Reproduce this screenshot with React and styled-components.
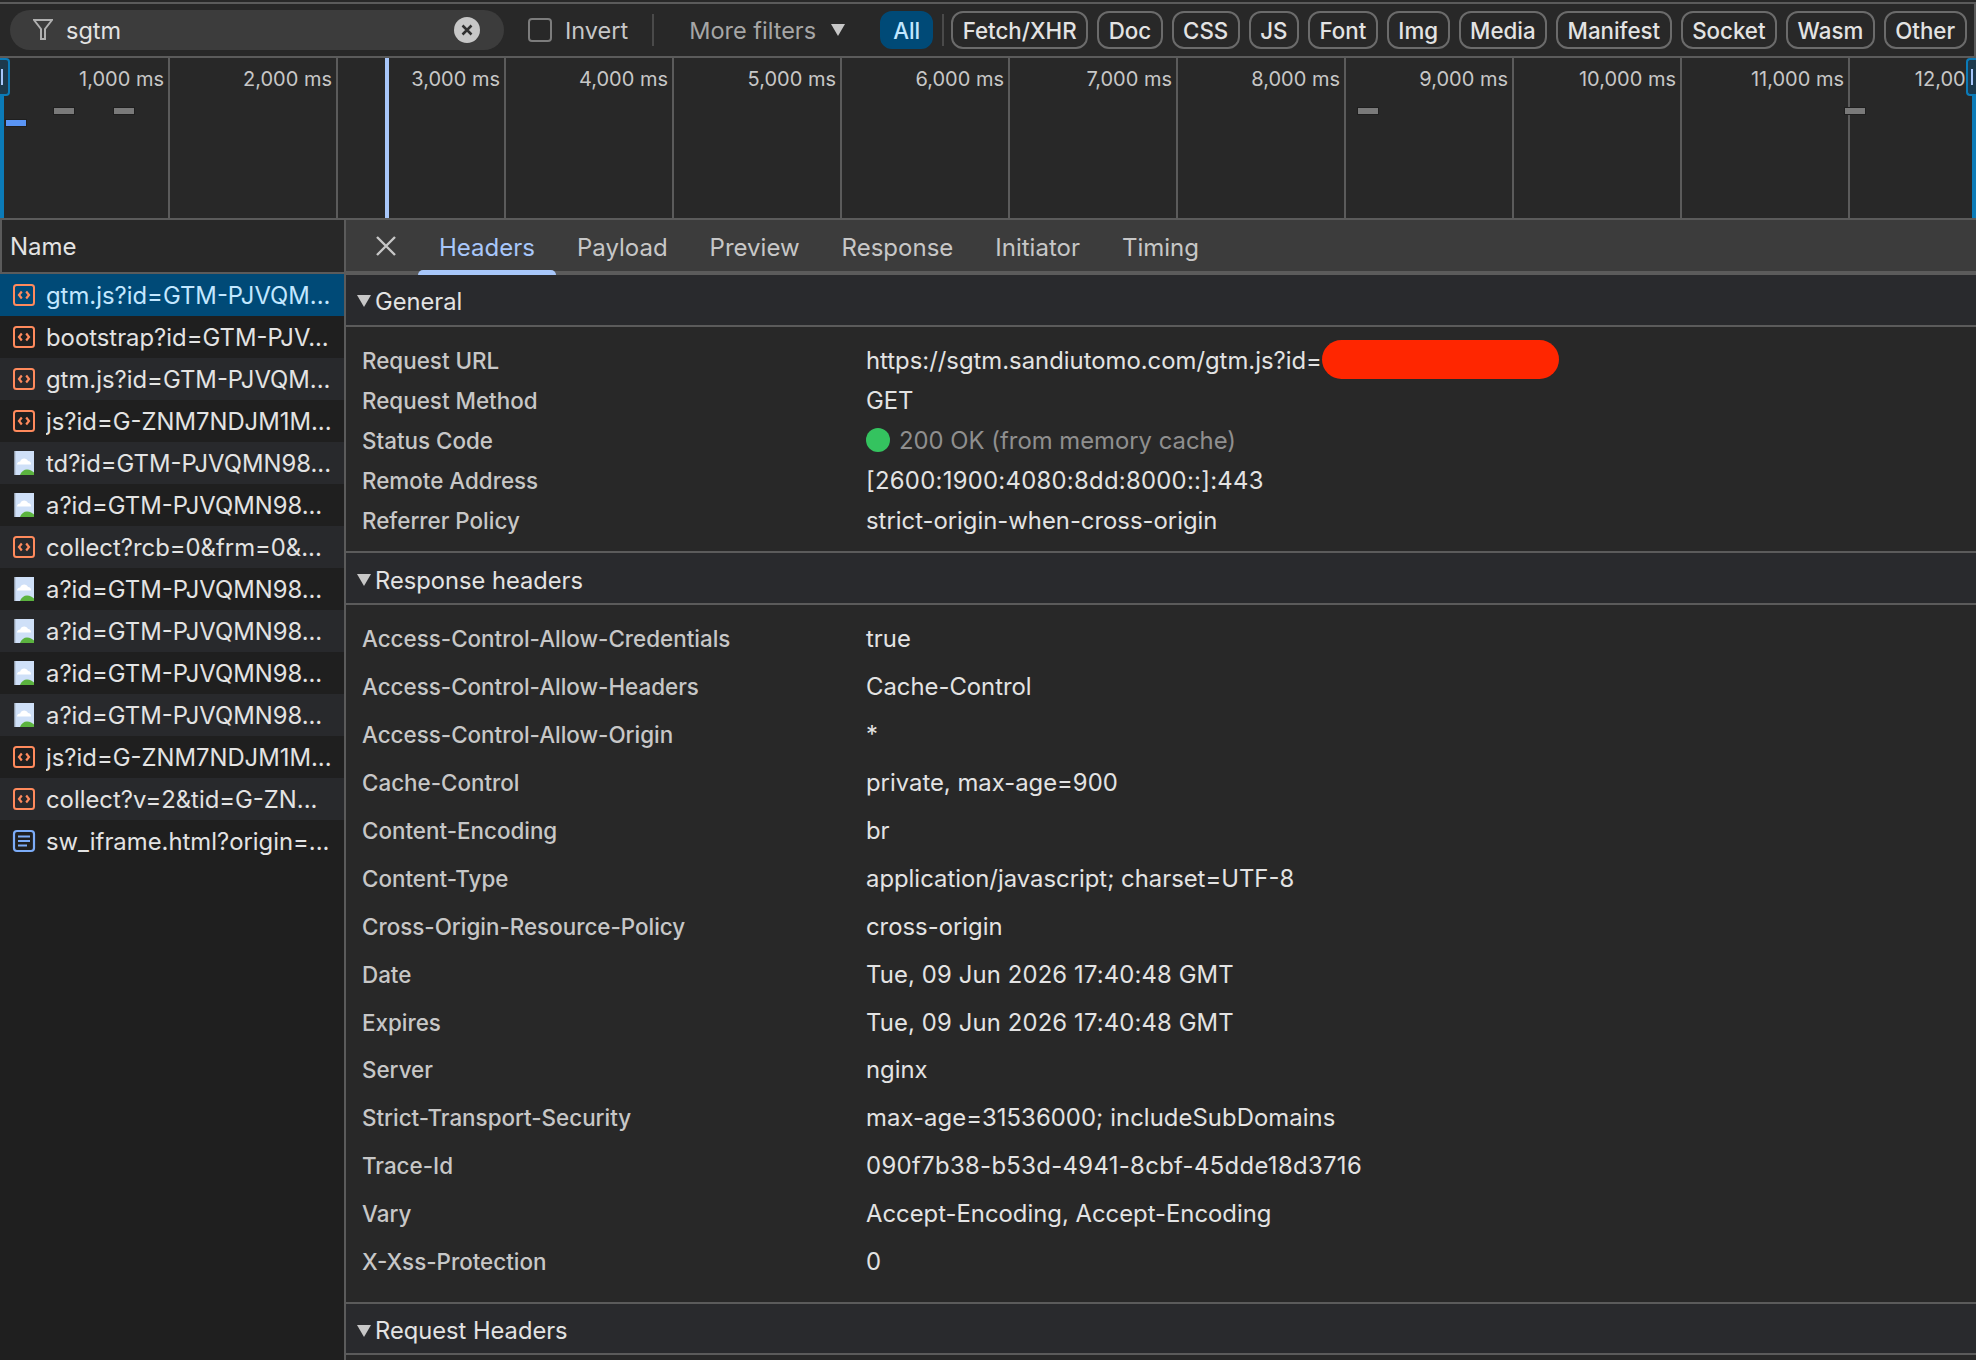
import React from 'react';
import styled, { createGlobalStyle } from 'styled-components';

const GlobalStyle = createGlobalStyle`
  html, body { margin: 0; padding: 0; background: #282828; }
  body { font-family: Inter, "Noto Sans", "Liberation Sans", sans-serif; }
  * { box-sizing: border-box; }
`;

const Page = styled.div`
  width: 1976px;
  height: 1360px;
  overflow: hidden;
  padding-top: 2px;
  background: #282828;
  display: flex;
  flex-direction: column;
`;

const Toolbar = styled.div`
  height: 56px;
  flex: none;
  display: flex;
  align-items: center;
  padding-left: 10px;
  border-top: 2px solid #5b5b5b;
  border-bottom: 2px solid #5b5b5b;
  border-right: 2px solid #5b5b5b;
  background: #282828;
  white-space: nowrap;
`;

const Search = styled.div`
  width: 494px;
  height: 40px;
  flex: none;
  border-radius: 20px;
  background: #3c3c3c;
  display: flex;
  align-items: center;
  padding: 0 24px 0 23px;
  color: #e3e3e3;
  font-size: 23.5px;
  gap: 13px;
`;

const SearchText = styled.span`
  flex: 1;
  padding-top: 1px;
`;

const Invert = styled.label`
  flex: none;
  display: flex;
  align-items: center;
  gap: 13px;
  margin-left: 24px;
  color: #c7c7c7;
  font-size: 23.5px;
`;

const CheckBox = styled.span`
  width: 24px;
  height: 24px;
  border: 2px solid #7c7c7c;
  border-radius: 4px;
`;

const Divider = styled.span`
  width: 2px;
  height: 32px;
  flex: none;
  background: #4a4a4a;
  margin: 0 ${p => p.$right}px 0 ${p => p.$left}px;
`;

const MoreFilters = styled.div`
  flex: none;
  display: flex;
  align-items: center;
  gap: 15px;
  color: #a6a6a6;
  font-size: 23.5px;
  margin-right: 35px;
`;

const Chips = styled.div`
  flex: none;
  display: flex;
  align-items: center;
  gap: 9px;
`;

const Chip = styled.div`
  height: 38px;
  padding: 0 ${p => (p.$active ? 11 : 9.5)}px;
  display: flex;
  align-items: center;
  border-radius: 12px;
  font-size: 22.3px;
  font-weight: 500;
  white-space: nowrap;
  color: ${p => (p.$active ? '#c2e7ff' : '#e3e3e3')};
  background: ${p => (p.$active ? '#004a77' : 'transparent')};
  border: 2px solid ${p => (p.$active ? '#004a77' : '#6b6b6b')};
`;

const Timeline = styled.div`
  position: relative;
  height: 160px;
  flex: none;
  display: flex;
  padding-left: 2px;
  background: #282828;
`;

const Tick = styled.div`
  width: 168px;
  flex: none;
  padding: 9px 4px 0 0;
  text-align: right;
  font-size: 20px;
  line-height: 24px;
  color: #c7c7c7;
  border-right: 2px solid #5b5b5b;
  white-space: nowrap;
`;

const Bar = styled.span`
  position: absolute;
  height: 6px;
  width: 20px;
  left: ${p => p.$x}px;
  top: ${p => p.$y}px;
  background: ${p => p.$color};
  box-shadow: 0 0 0 1px #1f1f1f;
`;

const PlayLine = styled.span`
  position: absolute;
  left: 385px;
  top: 0;
  bottom: 0;
  width: 4px;
  background: #a8c7fa;
`;

const EdgeLine = styled.span`
  position: absolute;
  top: 0;
  bottom: 0;
  width: 4px;
  background: #0b7bb8;
  ${p => (p.$right ? 'right: 0;' : 'left: 0;')}
`;

const Handle = styled.span`
  position: absolute;
  top: 0;
  width: 10px;
  height: 38px;
  background: #1d3a4d;
  border: 2px solid #0b7bb8;
  ${p => (p.$right
    ? 'right: 0; border-radius: 4px 0 0 4px; border-right: 0;'
    : 'left: 0; border-radius: 0 4px 4px 0; border-left: 0;')}
  &::after {
    content: '';
    position: absolute;
    top: 9px;
    bottom: 9px;
    width: 2px;
    background: #a8c7fa;
    ${p => (p.$right ? 'left: 3px;' : 'left: 1px;')}
  }
`;

const Main = styled.div`
  flex: 1;
  min-height: 0;
  display: flex;
  border-top: 2px solid #5b5b5b;
`;

const Sidebar = styled.div`
  width: 346px;
  flex: none;
  display: flex;
  flex-direction: column;
  background: #1f1f1f;
  border-right: 2px solid #5b5b5b;
`;

const NameHead = styled.div`
  height: 54px;
  flex: none;
  display: flex;
  align-items: center;
  padding-left: 8px;
  font-size: 24px;
  color: #e3e3e3;
  background: #282828;
  border-left: 2px solid #5b5b5b;
  border-bottom: 2px solid #5b5b5b;
`;

const Row = styled.div`
  height: 42px;
  flex: none;
  display: flex;
  align-items: center;
  gap: 10px;
  padding: 0 8px 0 12px;
  font-size: 23.85px;
  white-space: nowrap;
  color: ${p => (p.$selected ? '#c2e7ff' : '#e3e3e3')};
  background: ${p => (p.$selected ? '#004a77' : p.$odd ? '#28292c' : '#1f1f1f')};
`;

const RowName = styled.span`
  flex: 1;
  min-width: 0;
  overflow: hidden;
`;

const Details = styled.div`
  flex: 1;
  min-width: 0;
  display: flex;
  flex-direction: column;
  background: #282828;
`;

const TabBar = styled.div`
  height: 55px;
  flex: none;
  display: flex;
  align-items: stretch;
  background: #3c3c3c;
  border-bottom: 4px solid #5b5b5b;
  margin-bottom: -2px;
  position: relative;
`;

const CloseTab = styled.div`
  width: 72px;
  padding-left: 29px;
  display: flex;
  align-items: center;
  color: #c7c7c7;
`;

const Tab = styled.div`
  position: relative;
  padding: 4px 21px 0;
  display: flex;
  align-items: center;
  font-size: 24px;
  color: ${p => (p.$active ? '#a8c7fa' : '#c7c7c7')};
  ${p => p.$active && `
    &::after {
      content: '';
      position: absolute;
      left: 0;
      right: 0;
      bottom: -4px;
      height: 5px;
      border-radius: 5px 5px 0 0;
      background: #a8c7fa;
    }
  `}
`;

const SectionHead = styled.div`
  height: ${p => p.$h}px;
  flex: none;
  display: flex;
  align-items: center;
  gap: 4px;
  padding: 4px 0 0 11px;
  font-size: 23.7px;
  color: #e3e3e3;
  background: #292a2d;
  border-bottom: 2px solid #5b5b5b;
`;

const Triangle = styled.span`
  width: 0;
  height: 0;
  border-left: 7px solid transparent;
  border-right: 7px solid transparent;
  border-top: 12px solid #c7c7c7;
`;

const Section = styled.div`
  flex: none;
  padding: ${p => p.$top}px 0 ${p => p.$bottom}px;
  border-bottom: 2px solid #5b5b5b;
`;

const KV = styled.div`
  height: ${p => p.$h}px;
  display: flex;
  align-items: center;
  font-size: 22.4px;
`;

const Key = styled.div`
  width: 520px;
  padding-left: 16px;
  flex: none;
  font-weight: 500;
  color: #c7c7c7;
`;

const Value = styled.div`
  display: flex;
  align-items: center;
  font-size: 23.85px;
  letter-spacing: ${p => p.$track || 0}px;
  color: ${p => (p.$muted ? '#8f8f8f' : '#e3e3e3')};
`;

const StatusDot = styled.span`
  width: 24px;
  height: 24px;
  border-radius: 50%;
  background: #34c35f;
  margin-right: 9px;
`;

const Redacted = styled.span`
  width: 237px;
  height: 39px;
  border-radius: 20px;
  background: #ff2600;
  margin-top: -2px;
`;

const ScriptIcon = () => (
  <svg width="24" height="24" viewBox="0 0 24 24" fill="none">
    <rect x="2" y="2" width="20" height="20" rx="2.5" stroke="#ff8a5c" strokeWidth="2" />
    <path d="M9.800 8.500 7 12l2.800 3.500M14.200 8.500 17 12l-2.800 3.500" stroke="#ff8a5c" strokeWidth="2.200" />
  </svg>
);

const ImageIcon = () => (
  <svg width="24" height="24" viewBox="0 0 24 24">
    <rect x="2" y="0" width="20" height="24" fill="#cfe0f8" />
    <rect x="2" y="0" width="1.300" height="24" fill="#8f9aa8" />
    <path d="M5 13.500c0-2 1.500-3 3.200-3C9 6.500 15 6.500 16 10c2 0 3.200 1.500 3 3.500H5z" fill="#fff" />
    <path d="M8 24c1.500-3.600 4-5.500 7-5.500s5.500 1.800 7 3V24H8z" fill="#5bb33f" />
  </svg>
);

const DocIcon = () => (
  <svg width="24" height="24" viewBox="0 0 24 24" fill="none">
    <rect x="2" y="2" width="20" height="20" rx="3" stroke="#7cacf8" strokeWidth="2.200" />
    <path d="M6 7.500h12M6 12h12M6 16.500h9" stroke="#7cacf8" strokeWidth="2.200" />
  </svg>
);

const FilterIcon = () => (
  <svg width="20" height="24" viewBox="0 0 20 24" fill="none" stroke="#b0b0b0" strokeWidth="2">
    <path d="M1 2h18l-7 9v10h-4V11L1 2z" />
  </svg>
);

const ClearIcon = () => (
  <svg width="26" height="26" viewBox="0 0 26 26">
    <circle cx="13" cy="13" r="13" fill="#c7c7c7" />
    <path d="M8.500 8.500l9 9M17.500 8.500l-9 9" stroke="#303030" strokeWidth="2.500" />
  </svg>
);

const CloseIcon = () => (
  <svg width="22" height="22" viewBox="0 0 22 22" stroke="#c7c7c7" strokeWidth="2.400">
    <path d="M2 2l18 18M20 2L2 20" />
  </svg>
);

const MenuArrow = () => (
  <svg width="14" height="12" viewBox="0 0 14 12">
    <path d="M0 0h14L7 12z" fill="#c7c7c7" />
  </svg>
);

const chips = ['Fetch/XHR', 'Doc', 'CSS', 'JS', 'Font', 'Img', 'Media', 'Manifest', 'Socket', 'Wasm', 'Other'];

const ticks = ['1,000 ms', '2,000 ms', '3,000 ms', '4,000 ms', '5,000 ms', '6,000 ms', '7,000 ms', '8,000 ms', '9,000 ms', '10,000 ms', '11,000 ms', '12,000 ms'];

const requests = [
  ['script', 'gtm.js?id=GTM-PJVQM...'],
  ['script', 'bootstrap?id=GTM-PJV...'],
  ['script', 'gtm.js?id=GTM-PJVQM...'],
  ['script', 'js?id=G-ZNM7NDJM1M...'],
  ['image', 'td?id=GTM-PJVQMN98...'],
  ['image', 'a?id=GTM-PJVQMN98...'],
  ['script', 'collect?rcb=0&frm=0&...'],
  ['image', 'a?id=GTM-PJVQMN98...'],
  ['image', 'a?id=GTM-PJVQMN98...'],
  ['image', 'a?id=GTM-PJVQMN98...'],
  ['image', 'a?id=GTM-PJVQMN98...'],
  ['script', 'js?id=G-ZNM7NDJM1M...'],
  ['script', 'collect?v=2&tid=G-ZN...'],
  ['doc', 'sw_iframe.html?origin=...'],
];

const icons = { script: ScriptIcon, image: ImageIcon, doc: DocIcon };

// track: the digit-heavy values run a bit wider in the reference
const responseHeaders = [
  ['Access-Control-Allow-Credentials', 'true'],
  ['Access-Control-Allow-Headers', 'Cache-Control'],
  ['Access-Control-Allow-Origin', '*'],
  ['Cache-Control', 'private, max-age=900'],
  ['Content-Encoding', 'br'],
  ['Content-Type', 'application/javascript; charset=UTF-8'],
  ['Cross-Origin-Resource-Policy', 'cross-origin'],
  ['Date', 'Tue, 09 Jun 2026 17:40:48 GMT', 0.13],
  ['Expires', 'Tue, 09 Jun 2026 17:40:48 GMT', 0.13],
  ['Server', 'nginx'],
  ['Strict-Transport-Security', 'max-age=31536000; includeSubDomains', 0.07],
  ['Trace-Id', '090f7b38-b53d-4941-8cbf-45dde18d3716', 0.35],
  ['Vary', 'Accept-Encoding, Accept-Encoding'],
  ['X-Xss-Protection', '0'],
];

export default function App() {
  return (
    <>
      <GlobalStyle />
      <Page>
        <Toolbar>
          <Search>
            <FilterIcon />
            <SearchText>sgtm</SearchText>
            <ClearIcon />
          </Search>
          <Invert>
            <CheckBox />
            Invert
          </Invert>
          <Divider $left={24} $right={35} />
          <MoreFilters>
            More filters
            <MenuArrow />
          </MoreFilters>
          <Chips>
            <Chip $active>All</Chip>
            <Divider $left={0} $right={-2} />
            {chips.map(c => <Chip key={c}>{c}</Chip>)}
          </Chips>
        </Toolbar>
        <Timeline>
          {ticks.map(t => <Tick key={t}>{t}</Tick>)}
          <Bar $x={6} $y={62} $color="#5a95f5" />
          <Bar $x={54} $y={50} $color="#7a7a7a" />
          <Bar $x={114} $y={50} $color="#7a7a7a" />
          <Bar $x={1358} $y={50} $color="#7a7a7a" />
          <Bar $x={1845} $y={50} $color="#7a7a7a" />
          <PlayLine />
          <EdgeLine />
          <EdgeLine $right />
          <Handle />
          <Handle $right />
        </Timeline>
        <Main>
          <Sidebar>
            <NameHead>Name</NameHead>
            {requests.map(([kind, name], i) => {
              const Icon = icons[kind];
              return (
                <Row key={i} $selected={i === 0} $odd={i % 2 === 0}>
                  <Icon />
                  <RowName>{name}</RowName>
                </Row>
              );
            })}
          </Sidebar>
          <Details>
            <TabBar>
              <CloseTab><CloseIcon /></CloseTab>
              <Tab $active>Headers</Tab>
              <Tab>Payload</Tab>
              <Tab>Preview</Tab>
              <Tab>Response</Tab>
              <Tab>Initiator</Tab>
              <Tab>Timing</Tab>
            </TabBar>
            <SectionHead $h={54}><Triangle />General</SectionHead>
            <Section $top={13} $bottom={11}>
              <KV $h={40}>
                <Key>Request URL</Key>
                <Value>https://sgtm.sandiutomo.com/gtm.js?id=<Redacted /></Value>
              </KV>
              <KV $h={40}><Key>Request Method</Key><Value>GET</Value></KV>
              <KV $h={40}>
                <Key>Status Code</Key>
                <Value $muted><StatusDot />200 OK (from memory cache)</Value>
              </KV>
              <KV $h={40}><Key>Remote Address</Key><Value $track={0.28}>[2600:1900:4080:8dd:8000::]:443</Value></KV>
              <KV $h={40}><Key>Referrer Policy</Key><Value>strict-origin-when-cross-origin</Value></KV>
            </Section>
            <SectionHead $h={52}><Triangle />Response headers</SectionHead>
            <Section $top={10} $bottom={17}>
              {responseHeaders.map(([k, v, track]) => (
                <KV key={k} $h={47.9}><Key>{k}</Key><Value $track={track}>{v}</Value></KV>
              ))}
            </Section>
            <SectionHead $h={51}><Triangle />Request Headers</SectionHead>
          </Details>
        </Main>
      </Page>
    </>
  );
}
